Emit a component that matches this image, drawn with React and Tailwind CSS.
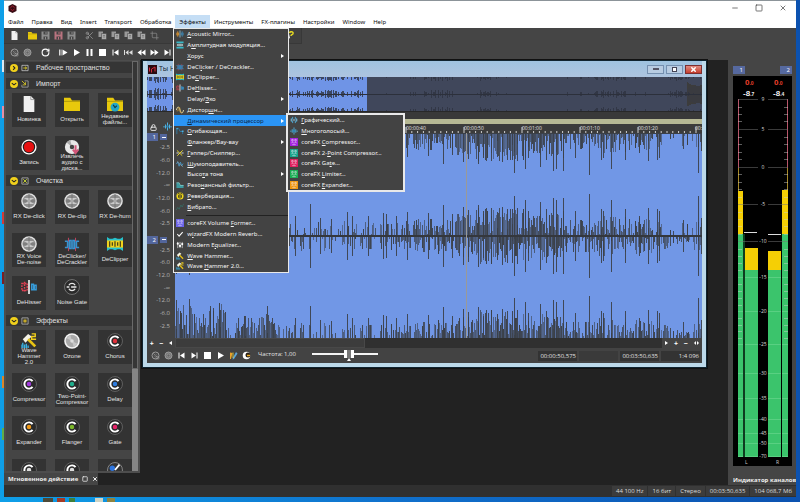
import React from 'react';
import { Minus, Square, X, Scissors, Crop, Lock, RotateCw } from 'lucide-react';

// --- Data ---

const MENU_BAR = ['Файл', 'Правка', 'Вид', 'Insert', 'Transport', 'Обработка', 'Эффекты', 'Инструменты', 'FX-плагины', 'Настройки', 'Window', 'Help'];

// "_" stands before the mnemonic letter
const EFFECTS_MENU = [
  { label: '_Acoustic Mirror...', icon: 'mirror' },
  { label: 'А_мплитудная модуляция...', icon: 'modulation' },
  { label: '_Хорус', arrow: true },
  { label: 'DeCl_icker / DeCrackler...', icon: 'declick' },
  { label: 'De_Clipper...', icon: 'declip' },
  { label: 'De_Hisser...', icon: 'dehiss' },
  { label: 'Delay/_Эхо', arrow: true },
  { label: 'Дистор_шн...', icon: 'sine' },
  { label: '_Динамический процессор', arrow: true, open: true },
  { label: '_Огибающая...', icon: 'envelope' },
  { label: '_Фланжер/Вау-вау', arrow: true },
  { label: '_Гэппер/Сниппер...', icon: 'gapper' },
  { label: '_Шумоподавитель...', icon: 'noise' },
  { label: 'Высо_та тона', arrow: true },
  { label: 'Резо_нансный фильтр...', icon: 'filter' },
  { label: '_Реверберация...', icon: 'reverb' },
  { label: '_Вибрато...', icon: 'vibrato' },
  { separator: true, label: 'separator' },
  { label: 'coreFX Volume _Former...', icon: 'core', color: '#6b63e8' },
  { label: 'w_izardFX Modern Reverb...', icon: 'check' },
  { label: 'Modern E_qualizer...', icon: 'equalizer' },
  { label: '_Wave Hammer...', icon: 'hammer' },
  { label: 'Wave _Hammer 2.0...', icon: 'hammer2' },
];

const DYNAMICS_MENU = [
  { label: '_Графический...', icon: 'graphic' },
  { label: '_Многоголосый...', icon: 'multiband' },
  { label: 'coreFX _Compressor...', icon: 'core', color: '#a321e0' },
  { label: 'coreFX 2-_Point Compressor...', icon: 'core', color: '#14a58a' },
  { label: 'coreFX Ga_te...', icon: 'core', color: '#df1d5c' },
  { label: 'coreFX _Limiter...', icon: 'core', color: '#18ad52' },
  { label: 'coreFX _Expander...', icon: 'core', color: '#f0980f' },
];

const PANEL_SECTIONS = [
  { title: 'Рабочее пространство', icon: 'workspace', closed: true, tiles: [] },
  {
    title: 'Импорт',
    icon: 'import',
    tiles: [
      { label: 'Новинка', icon: 'file' },
      { label: 'Открыть', icon: 'folder' },
      { label: 'Недавние\nфайлы...', icon: 'recent' },
      { label: 'Запись', icon: 'record' },
      { label: 'Извлечь\nаудио с\nдиска...', icon: 'disc' },
    ],
  },
  {
    title: 'Очистка',
    icon: 'clean',
    tiles: [
      { label: 'RX De-click', icon: 'rx' },
      { label: 'RX De-clip', icon: 'rx' },
      { label: 'RX De-hum', icon: 'rx' },
      { label: 'RX Voice\nDe-noise', icon: 'rx' },
      { label: 'DeClicker/\nDeCrackler', icon: 'declick' },
      { label: 'DeClipper', icon: 'declip' },
      { label: 'DeHisser', icon: 'dehiss' },
      { label: 'Noise Gate', icon: 'gate' },
    ],
  },
  {
    title: 'Эффекты',
    icon: 'fx',
    tiles: [
      { label: 'Wave\nHammer\n2.0', icon: 'hammer2' },
      { label: 'Ozone', icon: 'ozone' },
      { label: 'Chorus', icon: 'ring', color: '#e0323c' },
      { label: 'Compressor', icon: 'ring', color: '#a33be0' },
      { label: 'Two-Point-\nCompressor', icon: 'ring', color: '#1fae8c' },
      { label: 'Delay', icon: 'ring', color: '#2f7de0' },
      { label: 'Expander', icon: 'ring', color: '#f09a1a' },
      { label: 'Flanger', icon: 'ring', color: '#7cb82a' },
      { label: 'Gate', icon: 'ring', color: '#e8246a' },
      { icon: 'ring', color: '#dddddd' },
      { icon: 'ring', color: '#dddddd' },
      { icon: 'knob' },
    ],
  },
];

const SCALE = ['-2.5', '-6.0', '-12.0', '-∞', '-12.0', '-6.0', '-2.5'];

const TIMES = [
  [231, '00:00:40'],
  [289, '00:00:50'],
  [347, '00:01:00'],
  [405, '00:01:10'],
  [463, '00:01:20'],
  [520, '00:'],
];

// --- Wave data ---

const makeRandom = (seed) => {
  let s = seed;
  return () => {
    s = (s * 16807) % 2147483647;
    return s / 2147483647;
  };
};

// [from, to, height, density]
const ENVELOPE = [
  [0, 20, 34, 1],
  [20, 32, 22, 1],
  [32, 51, 34, 1],
  [51, 60, 10, 0.7],
  [60, 98, 22, 0.95],
  [98, 200, 13, 0.42],
  [200, 240, 13, 0.5],
  [240, 280, 16, 0.7],
  [280, 300, 20, 0.95],
  [300, 350, 26, 0.98],
  [350, 392, 24, 0.92],
  [392, 422, 15, 0.75],
  [422, 452, 19, 0.85],
  [452, 486, 17, 0.75],
  [486, 527, 12, 0.55],
];

const PEAKS = [
  [1, 38], [6, 25], [14, 39], [35, 32], [38, 30], [45, 28], [50, 26], [63, 20], [70, 22], [92, 32], [97, 20],
  [120, 20], [135, 32], [145, 18], [156, 17], [172, 24], [177, 20], [193, 20], [208, 23], [211, 22], [221, 20],
  [232, 24], [253, 23], [268, 31], [277, 22], [288, 29], [293, 26], [303, 31], [308, 22], [316, 28], [322, 24],
  [327, 29], [332, 27], [337, 27], [339, 40], [342, 28], [350, 36], [353, 25], [365, 34], [371, 27], [378, 38],
  [381, 36], [388, 38], [400, 25], [414, 42], [426, 27], [428, 25], [436, 36], [450, 27], [464, 20], [473, 28],
  [482, 27], [484, 25], [508, 16], [523, 40], [526, 18],
];

const buildTeeth = (seed) => {
  const rnd = makeRandom(seed);
  const teeth = [];
  ENVELOPE.forEach(([from, to, height, density]) => {
    for (let x = from; x < to; x++) {
      if (rnd() < density) {
        teeth.push({ x, h: 2 + Math.round(rnd() * height), o: 0.5 + rnd() * 0.5 });
      }
    }
  });
  PEAKS.forEach(([x, h]) => teeth.push({ x, h, o: 0.9 }));
  return teeth;
};

const TEETH = [buildTeeth(71), buildTeeth(907)];

// --- Icons ---

const Svg = ({ children, size = 'size-[9px]', box = '0 0 18 18' }) => (
  <svg viewBox={box} className={`${size} shrink-0`} fill="none" aria-hidden="true">{children}</svg>
);

const Art = ({ name, color, size }) => {
  switch (name) {
    case 'mirror':
      return <Svg size={size}><path d="M2 6v6M4 3v12M6 6v6" stroke="#e59a2f" strokeWidth="2" /><path d="M9 1v16" stroke="#8ab8cc" strokeWidth="2" /><path d="M12 6v6M14 3v12M16 6v6" stroke="#3d88b7" strokeWidth="2" /></Svg>;
    case 'modulation':
      return <Svg size={size}><path d="M1 1h16v4H1zM1 13h16v4H1z" fill="#37b9c9" /><path d="M2 9h14M4 7v4M7 6v6M11 6v6M14 7v4" stroke="#d7f1f4" strokeWidth="1.5" /></Svg>;
    case 'declick':
      return <Svg size={size}><path d="M1 6h3v7H1M17 6h-3v7h3M6 5h2v9H6zM10 5h2v9h-2z" stroke="#3a92cf" strokeWidth="1.7" /><path d="M5 2v4M13 2v4M5 13v4M13 13v4" stroke="#d54763" /></Svg>;
    case 'declip':
      return <Svg size={size}><path d="M0 1l3 2h3l3-1 3 1h3l3-2v16l-3-2h-3l-3 1-3-1H3l-3 2z" fill="#28c2cc" /><path d="M0 5h18v8H0z" fill="#f2d21b" /><path d="M3 6v6M6 7v4M9 6v6M12 7v4M15 6v6" stroke="#454318" strokeWidth="1.4" /></Svg>;
    case 'dehiss':
      return <Svg size={size}><path d="M1 5h6v8H1zM4 3v12" stroke="#df4053" strokeWidth="1.6" strokeDasharray="2 1" /><path d="M9 1v16" stroke="#e6e6e6" strokeWidth="2" /><path d="M12 6h2v6h-2zM15 7h2v5h-2z" stroke="#379bd8" strokeWidth="1.6" /></Svg>;
    case 'sine':
      return <Svg size={size}><path d="M1 9c2-9 6-9 8 0s6 9 8 0" stroke="#eee6b5" strokeWidth="2" /><path d="M1 11h4V4h4v10h5" stroke="#e2a72e" strokeWidth="1.2" /></Svg>;
    case 'envelope':
      return <Svg size={size}><path d="M2 16V3h4l3 7h6v6" stroke="#2b83b5" strokeWidth="1.8" /><path d="M1 2h3v3H1zM13 8h4v3h-4z" fill="#4cb0df" /></Svg>;
    case 'gapper':
      return <Svg size={size}><path d="M2 3l12 12M3 15L15 3" stroke="#e6d32e" strokeWidth="2.2" /><path d="M1 9h5M12 9h5" stroke="#e5e5e5" strokeWidth="2" /></Svg>;
    case 'noise':
      return <Svg size={size}><path d="M1 9l3-5 3 10 3-9 3 8 3-5" stroke="#4aa2d7" strokeWidth="1.7" /><path d="M2 3l14 13" stroke="#bcc4c8" /></Svg>;
    case 'filter':
      return <Svg size={size}><path d="M1 4h6l2 5h8v7H1z" fill="#3d9aa0" /><path d="M1 4h6l3 6h7" stroke="#8fd0cf" strokeWidth="1.5" /></Svg>;
    case 'reverb':
      return <Svg size={size}><circle cx="9" cy="9" r="8" fill="#f1d91c" /><path d="M9 3v12M6 7v6M12 7v6M4 5l3-2M14 5l-3-2" stroke="#222" strokeWidth="2" /></Svg>;
    case 'vibrato':
      return <Svg size={size}><path d="M1 15l3-5 3 4 4-9 3 4 3-7" stroke="#2d8c7d" strokeWidth="1.6" strokeDasharray="2 1" /></Svg>;
    case 'check':
      return <Svg size={size}><path d="M3 9l4 5 8-9" stroke="#fff" strokeWidth="2.4" /></Svg>;
    case 'equalizer':
      return <Svg size={size}><path d="M4 2v14M9 2v14M14 2v14" stroke="#ddd" strokeWidth="1.6" /><circle cx="4" cy="6" r="2.4" fill="#fff" /><circle cx="9" cy="11" r="2.6" fill="#fff" /><circle cx="14" cy="7" r="2.4" fill="#fff" /></Svg>;
    case 'hammer':
    case 'hammer2':
      return (
        <Svg size={size}>
          <path d="M0 17v-4M2 17v-6M4 17v-4M6 17v-5M8 17v-3" stroke="#3bb2e2" strokeWidth="1.5" />
          <path d="M2 7l6-6 4 3-7 7z" fill="#f4f2e6" />
          <path d="M8 7l8 8" stroke="#e8c313" strokeWidth="3" />
          {name === 'hammer2' && <path d="M12 1h4v3h-4v3h5" stroke="#f3d01b" strokeWidth="1.6" />}
        </Svg>
      );
    case 'graphic':
      return <Svg size={size}><path d="M3 5v8M6 2v5M6 11v5M9 7v4M12 2v5M12 11v5M15 5v8" stroke="#4fb2e0" strokeWidth="2" /><path d="M1 9h16" stroke="#d9eef7" /></Svg>;
    case 'multiband':
      return <Svg size={size}><path d="M9 1v16M5 5v8M13 5v8M2 8v3M16 8v3" stroke="#4fb2e0" strokeWidth="2" /><circle cx="9" cy="9" r="2.6" fill="#2f89ba" /></Svg>;
    case 'core':
      return <Svg size={size}><path d="M0 0h18v18H0z" fill={color} /><path d="M4 3h3v4H4zM11 3h3v4h-3zM3 11l3-2 2 3M15 11l-3-2-2 3M5 15h8" stroke="#f4ecfa" strokeWidth="1.2" /></Svg>;
    case 'file':
      return <Svg size={size}><path d="M3 0h8l4 4v14H3z" fill="#f1f1f1" /><path d="M11 0v4h4" stroke="#999" /></Svg>;
    case 'folder':
      return <Svg size={size}><path d="M0 2h7l2 3h9v12H0z" fill="#e8c90c" /><path d="M0 6h18" stroke="#a8910a" /></Svg>;
    case 'recent':
      return <Svg size={size}><path d="M0 2h7l2 3h9v12H0z" fill="#e8c90c" /><path d="M0 6h18" stroke="#a8910a" /><circle cx="9" cy="12.500" r="5" fill="#22a7c6" /><path d="M7 10l2 3 2-2" stroke="#0c3c4a" strokeWidth="1.3" /></Svg>;
    case 'record':
      return <Svg size={size}><circle cx="9" cy="9" r="8.500" fill="#fff" /><circle cx="9" cy="9" r="7" fill="#1f1f1f" /><circle cx="9" cy="9" r="5.800" fill="#e81111" /></Svg>;
    case 'disc':
      return <Svg size={size}><circle cx="9" cy="9" r="8" fill="#e8e8e8" /><path d="M9 9L3 4a8 8 0 0 1 4-3z" fill="#aaa" /><circle cx="9" cy="9" r="2.500" fill="#444" /><path d="M13 7v7M10 12l3 4 3-4" stroke="#d25678" strokeWidth="2.2" /></Svg>;
    case 'rx':
      return <Svg size={size}><circle cx="9" cy="9" r="8.800" fill="#e4e4e4" /><circle cx="9" cy="9" r="7.200" fill="#8d8d8d" /><path d="M9 9L3 5.500h12L3 12.500h12z" fill="#c9c9c9" /><path d="M2 9h14M9 1v16" stroke="#6a6a6a" strokeWidth=".8" /><circle cx="9" cy="9" r="2" fill="#aaa" /></Svg>;
    case 'ozone':
      return <Svg size={size}><circle cx="9" cy="9" r="8.800" fill="#f4f4f4" /><circle cx="9" cy="9" r="7" fill="#a9a9a9" /><path d="M9 9L3 6l4-4zM9 9l6 3-4 4z" fill="#c6c6c6" /><circle cx="9" cy="9" r="2" fill="#ddd" /></Svg>;
    case 'gate':
      return <Svg size={size}><circle cx="9" cy="9" r="8.400" fill="#2a2a2a" stroke="#8d8d8d" strokeWidth=".8" /><path d="M5.500 7a4 4 0 0 1 7 0M5.500 11a4 4 0 0 0 7 0M3 9h3M8 9h6" stroke="#e8e8e8" strokeWidth="1.500" /></Svg>;
    case 'ring':
      return <Svg size={size}><circle cx="9" cy="9" r="8.400" fill="#2a2a2a" stroke="#757575" strokeWidth=".8" /><path d="M13 5.700a5.200 5.200 0 1 0 0 6.600" stroke="#fff" strokeWidth="2.200" /><circle cx="9" cy="9" r="2.500" fill={color} /></Svg>;
    case 'knob':
      return <Svg size={size}><circle cx="9" cy="9" r="8.400" stroke="#8e8e8e" /><circle cx="6" cy="7" r="3" fill="#2e75df" /><path d="M9 9l5-6" stroke="#fff" strokeWidth="2" /></Svg>;
    case 'workspace':
      return <Svg size={size}><path d="M2 3h14v12H2z" stroke="#ddd" strokeWidth="1.500" /><path d="M5 9h7M9 6l4 3-4 3" stroke="#e9d427" strokeWidth="1.800" /></Svg>;
    case 'import':
      return <Svg size={size}><path d="M8 2h8v14H2v-5" stroke="#bbb" strokeWidth="1.500" /><path d="M2 2l8 8M10 5v6H4" stroke="#e9d427" strokeWidth="1.800" /></Svg>;
    case 'clean':
      return <Svg size={size}><path d="M2 2h14v14H2z" stroke="#ccc" strokeWidth="1.500" /><path d="M5 5l8 8M13 5l-8 8" stroke="#cfdc35" strokeWidth="2" /></Svg>;
    case 'fx':
      return <Svg size={size}><path d="M2 2h14v14H2z" stroke="#ccc" strokeWidth="1.500" /><path d="M9 4v10M5 7l8 4M13 7l-8 4" stroke="#e9c727" strokeWidth="1.800" /></Svg>;
    case 'save':
      return <Svg size={size}><path d="M1 1h16v16H1z" fill={color} /><path d="M5 1h8v6H5zM5 11h8v6H5z" fill="#454545" /><path d="M9 12v5M10 2v4" stroke={color} strokeWidth="2" /></Svg>;
    case 'copy':
      return <Svg size={size}><path d="M1 1h9v11H1z" fill="#999" /><path d="M7 5h10v12H7z" fill="#aaa" stroke="#3e3e3e" /><path d="M10 9h4M10 12h4" stroke="#555" /></Svg>;
    case 'cut':
      return <Scissors className="size-[9px] text-[#999]" />;
    case 'crop':
      return <Crop className="size-[9px] text-[#888]" />;
    case 'loop':
      return <RotateCw className="size-[9px] text-white" strokeWidth={3} />;
    case 'globe':
      return <Svg size={size}><circle cx="9" cy="9" r="7" stroke="#9c9c9c" strokeWidth="2" /><circle cx="9" cy="9" r="3" stroke="#888" /><path d="M4 4l10 10M10 11h6v5h-6z" stroke="#9c9c9c" /></Svg>;
    case 'circle':
      return <Svg size={size}><circle cx="9" cy="9" r="7" fill="#777" stroke="#9c9c9c" strokeWidth="2" /><circle cx="9" cy="9" r="3" fill="#666" stroke="#aaa" /></Svg>;
    case 'playFrom':
      return <Svg size={size}><path d="M1 3v12M4 3v12" stroke="#fff" strokeWidth="1.600" /><path d="M7 3l10 6-10 6z" fill="#fff" /></Svg>;
    case 'play':
      return <Svg size={size}><path d="M4 2l12 7-12 7z" fill="#fff" /></Svg>;
    case 'pause':
      return <Svg size={size}><path d="M3 2h4v14H3zM11 2h4v14h-4z" fill="#fff" /></Svg>;
    case 'stop':
      return <Svg size={size}><path d="M2 2h14v14H2z" fill="#fff" /></Svg>;
    case 'start':
      return <Svg size={size}><path d="M3 3h2v12H3zM15 3v12L6 9z" fill="#fff" /></Svg>;
    case 'end':
      return <Svg size={size}><path d="M13 3h2v12h-2zM3 3v12l9-6z" fill="#fff" /></Svg>;
    case 'first':
      return <Svg size={size}><path d="M0 4h2v10H0zM9 4v10L3 9zM17 4v10l-7-5z" fill="#ddd" /></Svg>;
    case 'rewind':
      return <Svg size={size}><path d="M9 3v12L1 9zM17 3v12L9 9z" fill="#fff" /></Svg>;
    case 'forward':
      return <Svg size={size}><path d="M1 3v12l8-6zM9 3v12l8-6z" fill="#fff" /></Svg>;
    case 'pencil':
      return <Svg size={size}><path d="M2 3l5 1-3 12H2z" fill="#e8a32c" /><path d="M14 2l3 3-7 11-3 1 1-4z" fill="#5aa5db" /><path d="M8 3v11" stroke="#f6e53a" strokeWidth="1.500" /></Svg>;
    case 'moon':
      return <Svg size={size}><circle cx="9" cy="9" r="7.500" fill="#fff" /><circle cx="12" cy="8" r="5" fill="#29221a" /><path d="M10 9h6" stroke="#efab27" strokeWidth="3" /></Svg>;
    case 'help':
      return <Svg size={size}><path d="M2 9l6-3 2 8-5 3z" fill="#f1f1f1" /><path d="M9 4c1-4 8-3 7 1-1 3-4 2-4 5" stroke="#e3d723" strokeWidth="3" /></Svg>;
    default:
      return <span className="size-[9px] shrink-0" />;
  }
};

// --- Menus ---

const Mnemonic = ({ text }) => {
  const [before, rest = ''] = text.split('_');
  if (!rest) return before;
  return <>{before}<u className="underline-offset-1">{rest[0]}</u>{rest.slice(1)}</>;
};

const MenuRow = ({ item }) => {
  if (item.separator) {
    return <li role="separator" className="h-[6px] shrink-0 flex items-center pl-3"><span className="h-px w-full bg-[#222]" /></li>;
  }
  return (
    <li className="relative flex min-h-0 flex-1">
      <button
        type="button"
        className={`flex w-full items-center pl-0.5 pr-1 leading-none whitespace-nowrap ${item.open ? 'bg-[#2b95f5] text-[#0b2747]' : 'text-[#f4f4f4]'}`}
      >
        <Art name={item.icon} color={item.color} size="size-2" />
        <span className={`flex-1 text-left ${item.icon ? 'ml-[3px]' : 'ml-0.5'}`}><Mnemonic text={item.label} /></span>
        {item.arrow && <span className="border-y-2 border-l-3 border-y-transparent border-l-white" />}
      </button>
      {item.open && (
        <ul className="absolute top-[-2px] left-full z-20 flex h-[79px] w-[119px] -translate-x-0.5 flex-col border-2 border-[#e9e9e9] bg-[#434343]">
          {DYNAMICS_MENU.map(sub => <MenuRow key={sub.label} item={sub} />)}
        </ul>
      )}
    </li>
  );
};

const MenuBar = () => (
  <nav className="h-[13px] bg-white font-['Noto_Sans',sans-serif] text-[6px] leading-none text-[#0c0c0c]">
    <ul className="flex h-full">
      {MENU_BAR.map(label => (
        <li key={label} className="relative flex">
          <button type="button" className={`px-1 ${label === 'Эффекты' ? 'bg-[#c5def5]' : ''}`}>{label}</button>
          {label === 'Эффекты' && (
            <ul className="absolute top-full -left-0.5 z-10 flex h-[245px] w-[116px] flex-col border border-[#e9e9e9] bg-[#434343]">
              {EFFECTS_MENU.map(item => <MenuRow key={item.label} item={item} />)}
            </ul>
          )}
        </li>
      ))}
    </ul>
  </nav>
);

// --- Toolbars ---

const ToolGroup = ({ tools }) => (
  <div className="flex items-center pr-[5px]">
    {tools.map(([icon, label, color]) => (
      <button key={label} type="button" aria-label={label} className="flex w-[13px] justify-center">
        <Art name={icon} color={color} />
      </button>
    ))}
  </div>
);

const Toolbars = () => (
  <div className="bg-[#454545]">
    <div className="flex h-4 w-[298px] items-center border-r border-b border-[#383838] bg-[#404040] pl-1">
      <ToolGroup tools={[['file', 'New']]} />
      <ToolGroup tools={[['folder', 'Open'], ['save', 'Save', '#8d8d8d'], ['save', 'Save as', '#b9737f'], ['save', 'Save all', '#8d8d8d']]} />
      <ToolGroup tools={[['cut', 'Cut'], ['copy', 'Copy'], ['copy', 'Paste'], ['copy', 'Mix'], ['copy', 'Paste new'], ['crop', 'Trim']]} />
      <span className="flex-1" />
      <ToolGroup tools={[['help', 'Help']]} />
    </div>
    <div className="flex h-4 items-center pl-1">
      <ToolGroup tools={[['globe', 'Record remote'], ['circle', 'Record']]} />
      <ToolGroup tools={[['loop', 'Loop']]} />
      <ToolGroup tools={[['playFrom', 'Play all'], ['play', 'Play'], ['pause', 'Pause'], ['stop', 'Stop'], ['start', 'Go to start'], ['first', 'Previous'], ['rewind', 'Rewind'], ['forward', 'Forward'], ['end', 'Go to end']]} />
    </div>
  </div>
);

// --- Left panel ---

const Tile = ({ tile }) => (
  <button type="button" className="flex h-[34px] w-[34px] flex-col items-center bg-[#333333] pt-[3px] text-center text-[6px] leading-[6px] text-[#e4e4e4]">
    <Art name={tile.icon} color={tile.color} size="size-4" />
    {tile.label && <span className="mt-px flex h-3 items-center whitespace-pre">{tile.label}</span>}
  </button>
);

const QuickActions = () => (
  <aside className="flex min-h-0 w-[136px] shrink-0 flex-col bg-[#222] font-['Liberation_Sans',sans-serif]">
    <div className="flex min-h-0 flex-1 border-2 border-t border-[#4d4d4d] bg-[#454545]">
      <div className="min-w-0 flex-1 overflow-hidden pt-px">
        {PANEL_SECTIONS.map(section => (
          <section key={section.title} className="mb-[5px]">
            <h2 className="flex h-[11px] items-center gap-[3px] bg-[#353535] pl-1 text-[7px] leading-none text-[#e0e0e0]">
              <Svg size="size-2">
                <circle cx="9" cy="9" r="9" fill="#f0d01c" />
                <path d={section.closed ? 'M7 5l4 4-4 4' : 'M4 7l5 4 5-4'} stroke="#222" strokeWidth="2.400" />
              </Svg>
              <Art name={section.icon} size="size-2" />
              <span className="ml-1">{section.title}</span>
            </h2>
            {section.tiles.length > 0 && (
              <div className="mt-1 grid grid-cols-[repeat(3,34px)] gap-[9px] pl-1.5">
                {section.tiles.map((tile, i) => <Tile key={i} tile={tile} />)}
              </div>
            )}
          </section>
        ))}
      </div>
      <div className="flex w-1.5 flex-col bg-[#858585]">
        <div className="h-3/4 border border-[#6a6a6a] bg-[#363636]" />
      </div>
    </div>
    <div className="flex h-3 w-[94px] items-center gap-1 bg-[#454545] pl-1 font-['Open_Sans',sans-serif] text-[6px] leading-none font-bold whitespace-nowrap text-[#eee]">
      <span>Мгновенное действие</span>
      <button type="button" aria-label="Float"><Square className="size-[6px]" strokeWidth={3} /></button>
      <button type="button" aria-label="Close panel"><X className="size-[6px]" strokeWidth={4} /></button>
    </div>
  </aside>
);

// --- Audio window ---

const Overview = () => {
  const rnd = makeRandom(33);
  const bars = [];
  for (let x = 0; x < 555; x++) {
    const early = x < 32;
    const loud = early || (x > 134 && x < 216) || (x > 276 && x < 306) || (x > 330 && x < 346) || (x > 446 && x < 480) || (x > 522 && x < 540);
    if (rnd() < (loud ? 0.6 : 0.08)) bars.push([x, 1 + rnd() * (early ? 6 : loud ? 3.2 : 1)]);
  }
  return (
    <svg viewBox="0 0 555 35" preserveAspectRatio="none" className="h-[35px] w-full" shapeRendering="crispEdges">
      <path d="M0 0h555v35H0z" fill="#3c3c3c" />
      <path d="M0 0h220v35H0z" fill="#6f94e6" />
      <path d="M220 0h320v35H220z" fill="#40475b" />
      <path d="M538 0h17v8c-6 2-12 0-17-4zM538 35h17v-8c-6-2-12 0-17 4z" fill="#40475b" />
      <path d="M540 12c4-4 9-2 15-3v17c-6-1-11 1-15-3z" fill="#3a3b40" />
      {bars.map(([x, h]) => (
        <path key={x} d={`M${x}.5 0v${h}M${x}.5 ${17 - h}v${h * 2}M${x}.5 ${34 - h}v${h}`} stroke="#2f3442" strokeWidth="1" opacity=".8" />
      ))}
      <path d="M0 17.500h555" stroke="#2c303b" />
      <path d="M0 34.500h555" stroke="#282828" />
    </svg>
  );
};

const Ruler = () => (
  <svg viewBox="0 0 527 9" preserveAspectRatio="none" className="h-[9px] w-full bg-[#3b3b3b]">
    {Array.from({ length: 91 }, (_, i) => (
      <path key={i} d={`M${i * 5.8 - 1} ${i % 10 === 0 ? 3 : 7}v6`} stroke="#d0d0d0" strokeWidth="1" />
    ))}
    {TIMES.map(([x, text]) => (
      <text key={text} x={x} y="6" fontSize="5" fill="#e2e2e2">{text}</text>
    ))}
  </svg>
);

const Waveform = () => (
  <svg viewBox="0 0 527 205" preserveAspectRatio="none" className="h-[205px] w-full" shapeRendering="crispEdges">
    <path d="M0 0h527v205H0z" fill="#7197e6" />
    {TEETH[0].map((t, i) => (
      <path key={i} d={`M${t.x}.5 0v${t.h}M${t.x}.5 ${103 - t.h}v${t.h}`} stroke="#3b4048" opacity={t.o} />
    ))}
    {TEETH[1].map((t, i) => (
      <path key={i} d={`M${t.x}.5 103v${t.h}M${t.x}.5 ${205 - t.h}v${t.h}`} stroke="#3b4048" opacity={t.o} />
    ))}
    <path d="M0 102h527v2H0z" fill="#34373d" />
    <path d="M0 0h527v1H0z" fill="#3b4048" />
    <path d="M291 0h1v205h-1z" fill="#9a9a98" />
  </svg>
);

const ChannelScale = ({ number }) => (
  <div className="flex flex-1 flex-col pb-1.5 text-[6px] leading-none text-[#b5b5b5]">
    <div className="flex h-2 items-center gap-0.5">
      <span className="h-full w-[11px] bg-[#53669c] pt-px pr-0.5 text-right text-white">{number}</span>
      <button type="button" aria-label={`Collapse channel ${number}`} className="flex h-1.5 w-[7px] items-center justify-center bg-[#53669c]">
        <span className="h-px w-1 bg-white" />
      </button>
    </div>
    <div className="flex flex-1 flex-col pr-[5px] text-right">
      {SCALE.map((mark, i) => <span key={i} className="flex flex-1 items-center justify-end">{mark}</span>)}
    </div>
  </div>
);

const AudioWindow = () => (
  <section className="mr-[21px] ml-0.5 border border-[#0f2430] bg-[#bcd9ea] px-1 pb-1 shadow-[0_0_0_1px_#111]">
    <header className="flex h-4 items-center bg-linear-to-b from-[#9fc3e0] to-[#adc4df] pl-px text-[7px] text-[#10182a]">
      <Svg><path d="M0 0h18v18H0z" fill="#2a0b10" /><path d="M3 13V5M7 15V8l7-4v9" stroke="#d22d3c" strokeWidth="2" /></Svg>
      <span className="ml-0.5 flex-1">Ты Н</span>
      <div className="flex gap-0.5">
        <button type="button" aria-label="Minimize file" className="flex h-[9px] w-[17px] items-center justify-center border border-[#7590b0] bg-[#b8cce2]"><span className="h-0.5 w-1.5 border border-[#556] bg-white" /></button>
        <button type="button" aria-label="Maximize file" className="flex h-[9px] w-[17px] items-center justify-center border border-[#7590b0] bg-[#b8cce2]"><span className="size-[5px] border border-[#445] bg-white" /></button>
        <button type="button" aria-label="Close file" className="flex h-[9px] w-[17px] items-center justify-center border border-[#7c2f30] bg-linear-to-b from-[#df8a80] to-[#c43a2c]"><X className="size-[7px] text-white" strokeWidth={5} /></button>
      </div>
    </header>
    <div className="bg-[#434343]">
      <Overview />
      <div className="flex">
        <div className="flex w-7 shrink-0 flex-col">
          <div className="flex h-[21px] items-end justify-around pb-0.5">
            <Lock className="size-[7px] text-[#eee]" strokeWidth={3} />
            <Art name="multiband" />
          </div>
          <div className="flex flex-1 flex-col">
            <ChannelScale number={1} />
            <ChannelScale number={2} />
          </div>
        </div>
        <div className="flex min-w-0 flex-1 flex-col">
          <div className="h-[7px] bg-[#393939]" />
          <div className="h-[5px] bg-[#b6b894]" />
          <Ruler />
          <Waveform />
        </div>
      </div>
      <div className="flex h-2.5 items-center justify-between bg-[#303030] text-[7px] leading-none font-bold text-white">
        <div className="flex h-full w-7 items-center justify-around bg-[#434343]">
          <button type="button">+</button>
          <button type="button">−</button>
          <button type="button" aria-label="Scroll left" className="border-y-2 border-r-3 border-y-transparent border-r-white" />
        </div>
        <div className="h-full flex-1"><div className="h-full w-[39%] border border-[#484848] bg-[#3c3c3c]" /></div>
        <div className="flex h-full w-10 items-center justify-around bg-[#434343]">
          <button type="button" aria-label="Scroll right" className="border-y-2 border-l-3 border-y-transparent border-l-white" />
          <button type="button">+</button>
          <button type="button">−</button>
          <button type="button" aria-label="Zoom fit" className="flex gap-px">
            <span className="border-y-2 border-r-2 border-y-transparent border-r-white" />
            <span className="border-y-2 border-l-2 border-y-transparent border-l-white" />
          </button>
        </div>
      </div>
      <div className="flex h-[15px] items-center pl-0.5 text-[6px] leading-none text-[#e3e3e3]">
        <ToolGroup tools={[['globe', 'Remote'], ['circle', 'Arm'], ['start', 'File start'], ['end', 'File end'], ['stop', 'Stop file'], ['play', 'Play file'], ['pencil', 'Edit tool'], ['moon', 'Scrub']]} />
        <label htmlFor="rate" className="mb-1 w-[54px] whitespace-nowrap">Частота: 1,00</label>
        <div className="flex w-[66px] flex-col">
          <input
            id="rate"
            type="range"
            min="0"
            max="100"
            defaultValue="58"
            className="h-2 w-full appearance-none bg-transparent [&::-webkit-slider-runnable-track]:h-0.5 [&::-webkit-slider-runnable-track]:bg-[#f4f4f4] [&::-webkit-slider-thumb]:-mt-[3px] [&::-webkit-slider-thumb]:h-2 [&::-webkit-slider-thumb]:w-2.5 [&::-webkit-slider-thumb]:appearance-none [&::-webkit-slider-thumb]:border-x-3 [&::-webkit-slider-thumb]:border-white [&::-webkit-slider-thumb]:bg-[#777]"
          />
          <span className="ml-[35px] w-0 border-x-2 border-b-3 border-x-transparent border-b-white" />
        </div>
        <div className="flex flex-1 justify-end gap-0.5 pr-0.5 text-right whitespace-nowrap text-[#e0e0e0]">
          <output className="h-2.5 w-[39px] bg-[#333] pt-0.5 pr-px">00:00:50,575</output>
          <output className="h-2.5 w-[39px] bg-[#3a3a3a]" />
          <output className="h-2.5 w-[39px] bg-[#333] pt-0.5 pr-px">00:03:50,635</output>
          <output className="h-2.5 w-[39px] bg-[#333] pt-0.5 pr-px">1:4 096</output>
        </div>
      </div>
    </div>
  </section>
);

// --- Level meters ---

const METER_MARKS = [[23, '9'], [53, '5'], [91, '0'], [128, '-5'], [165, '-10'], [201, '-15'], [235, '-20'], [268, '-25'], [297, '-30'], [322, '-35'], [343, '-40'], [357, '-45'], [367, '-50'], [380, '-70']];

const MINOR_TICKS = [31, 38, 45, 61, 68, 76, 83, 98, 106, 113, 121, 136, 143, 150, 158, 173, 180, 187, 194, 208, 215, 222, 229, 242, 249, 255, 262];

const Meters = () => (
  <aside className="flex w-[68px] shrink-0 flex-col bg-[#454545] pl-[5px]">
    <div className="flex h-4 items-end justify-between pr-1 pb-0.5 text-[6px] leading-none text-white">
      <span className="h-2 w-3 bg-[#56699f] pt-px pr-0.5 text-right">1</span>
      <span className="h-2 w-3 bg-[#56699f] pt-px pr-0.5 text-right">2</span>
    </div>
    <svg viewBox="0 0 59 390" className="mr-1 block h-[390px] w-[59px] bg-black" shapeRendering="crispEdges">
      <g fontWeight="bold" fontFamily="Liberation Sans, sans-serif">
        <text x="12" y="9" fontSize="8" fill="#f0402c">0<tspan fontSize="5">.0</tspan></text>
        <text x="41" y="9" fontSize="8" fill="#f0402c">0<tspan fontSize="5">.0</tspan></text>
        <text x="10" y="20" fontSize="8" fill="#eee">-8<tspan fontSize="5">.7</tspan></text>
        <text x="40" y="20" fontSize="8" fill="#eee">-8<tspan fontSize="5">.4</tspan></text>
      </g>
      <path d="M5 23h1v69H5zM54 23h1v69h-1z" fill="#b8566a" />
      <path d="M5 92h1v23H5zM54 92h1v22h-1z" fill="#a88a28" />
      <path d="M5 115h5v43H5zM49 114h6v44h-6zM12 172h13v22H12zM35 175h13v19H35z" fill="#f5cf05" />
      <path d="M5 158h5v223H5zM49 158h6v223h-6zM12 194h13v187H12zM35 194h13v187H35z" fill="#3bc46c" />
      <path d="M10 158h2v223h-2z" fill="#0e3d20" />
      <path d="M11 156h13v1H11zM35 158h13v1H35z" fill="#ddd" />
      {METER_MARKS.map(([y, text]) => (
        <g key={text}>
          <path d={y < 170 ? `M5 ${y}.5h20M35 ${y}.5h20` : `M5 ${y}.5h5M12 ${y}.5h13M35 ${y}.5h13M49 ${y}.5h6`} stroke={y < 170 ? '#777' : '#78dd98'} opacity=".5" />
          <text x="30" y={y + 2} fontSize="5" fill="#d9d9d9" textAnchor="middle">{text}</text>
        </g>
      ))}
      {MINOR_TICKS.map(y => (
        <path key={y} d={`M5 ${y}.5h4M51 ${y}.5h4`} stroke="#cfcfcf" opacity=".45" />
      ))}
      <text x="12" y="388" fontSize="5" fill="#ccc">L</text>
      <text x="43" y="388" fontSize="5" fill="#ccc">R</text>
    </svg>
    <h2 className="mt-auto h-2.5 overflow-hidden text-[6px] leading-[10px] font-bold whitespace-nowrap text-[#eee]">Индикатор каналов</h2>
  </aside>
);

// --- App ---

const TitleBar = () => (
  <header className="flex h-[15px] items-center border-t border-[#8c9499] bg-white pl-1">
    <Svg><path d="M9 0l8 4v10l-8 4-8-4V4z" fill="#3a0d14" /><path d="M5 7l4-3 4 3M5 10l4 3 4-3" stroke="#b9243a" strokeWidth="1.600" /></Svg>
    <span className="flex-1" />
    <div className="flex gap-4 pr-[9px] text-[#333]">
      <button type="button" aria-label="Minimize"><Minus className="size-2" /></button>
      <button type="button" aria-label="Maximize"><Square className="size-2" /></button>
      <button type="button" aria-label="Close"><X className="size-2" /></button>
    </div>
  </header>
);

const StatusBar = () => (
  <footer className="flex h-3 shrink-0 items-center justify-end gap-px bg-[#303030] text-[6px] leading-none whitespace-nowrap text-[#dddddd]">
    {['44 100 Hz', '16 бит', 'Стерео', '00:03:50,635', '104 068,7 Мб'].map(text => (
      <span key={text} className="flex h-2.5 items-center bg-[#3c3c3c] px-1">{text}</span>
    ))}
  </footer>
);

const App = () => (
  <div className="relative flex h-screen flex-col overflow-hidden bg-linear-to-r from-[#0f9fe8] via-[#1070cc] to-[#0c52b0] px-1 pb-[5px] font-['Open_Sans',sans-serif]">
    <TitleBar />
    <MenuBar />
    <Toolbars />
    <main className="flex min-h-0 flex-1 bg-[#222222]">
      <QuickActions />
      <div className="min-w-0 flex-1"><AudioWindow /></div>
      <Meters />
    </main>
    <StatusBar />
    {/* desktop shortcuts peeking out from behind the window */}
    {['top-[60px] bg-[#d9e8f2]', 'top-[106px] bg-[#e58fa6]', 'top-[212px] bg-[#d03b3b]', 'top-[272px] bg-[#7a1f25]', 'top-[376px] bg-[#d8862c]', 'top-[428px] bg-[#5fae4a]'].map(pos => (
      <span key={pos} className={`absolute left-0.5 h-3 w-0.5 ${pos}`} />
    ))}
    <div className="absolute bottom-0 left-[43px] flex h-1 gap-1">
      <span className="w-2.5 bg-[#4d4a38]" />
      <span className="w-2 bg-[#a33a25]" />
      <span className="mr-4 w-1.5 bg-[#3e7f3a]" />
      <span className="w-2 bg-[#cfd4c4]" />
      <span className="w-2 bg-[#8d8340]" />
    </div>
  </div>
);

export default App;
